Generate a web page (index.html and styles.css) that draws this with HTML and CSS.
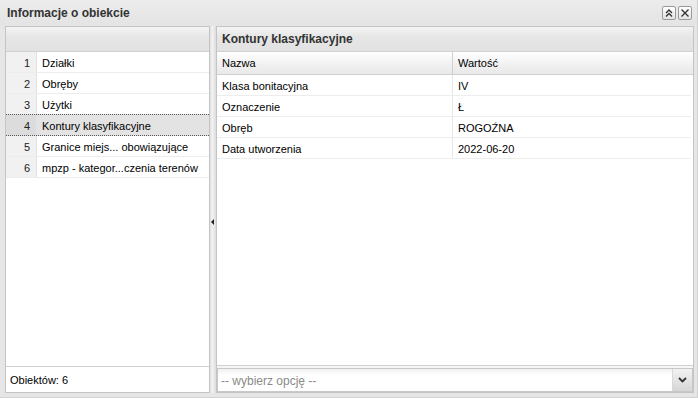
FILE: index.html
```html
<!DOCTYPE html>
<html lang="pl">

<head>
    <meta charset="UTF-8">
    <title>Informacje o obiekcie</title>
    <link rel="stylesheet" href="styles.css">
</head>

<body>
    <div class="window">
        <div class="titlebar">
            <span class="title">Informacje o obiekcie</span>
            <div class="tools">
                <span class="tool">
                    <svg width="10" height="10" viewBox="0 0 10 10">
                        <path d="M2 5 L5 2 L8 5 M2 8.5 L5 5.5 L8 8.5" fill="none" stroke="#333" stroke-width="1.4"/>
                    </svg>
                </span>
                <span class="tool">
                    <svg width="10" height="10" viewBox="0 0 10 10">
                        <path d="M1.5 1.5 L8.5 8.5 M8.5 1.5 L1.5 8.5" fill="none" stroke="#333" stroke-width="1.4"/>
                    </svg>
                </span>
            </div>
        </div>

        <div class="body">
            <!-- lista warstw -->
            <div class="panel list-panel">
                <div class="panel-header"></div>
                <div class="list">
                    <div class="list-row"><span class="num">1</span><span class="name">Działki</span></div>
                    <div class="list-row"><span class="num">2</span><span class="name">Obręby</span></div>
                    <div class="list-row"><span class="num">3</span><span class="name">Użytki</span></div>
                    <div class="list-row selected"><span class="num">4</span><span class="name">Kontury klasyfikacyjne</span></div>
                    <div class="list-row"><span class="num">5</span><span class="name">Granice miejs... obowiązujące</span></div>
                    <div class="list-row"><span class="num">6</span><span class="name">mpzp - kategor...czenia terenów</span></div>
                </div>
                <div class="list-footer">Obiektów: 6</div>
            </div>

            <div class="splitter"><span class="collapse"></span></div>

            <!-- szczegóły obiektu -->
            <div class="panel detail-panel">
                <div class="panel-header">Kontury klasyfikacyjne</div>
                <div class="grid">
                    <div class="grid-row grid-head">
                        <span class="cell key">Nazwa</span>
                        <span class="cell val">Wartość</span>
                    </div>
                    <div class="grid-row">
                        <span class="cell key">Klasa bonitacyjna</span>
                        <span class="cell val">IV</span>
                    </div>
                    <div class="grid-row">
                        <span class="cell key">Oznaczenie</span>
                        <span class="cell val">Ł</span>
                    </div>
                    <div class="grid-row">
                        <span class="cell key">Obręb</span>
                        <span class="cell val">ROGOŹNA</span>
                    </div>
                    <div class="grid-row">
                        <span class="cell key">Data utworzenia</span>
                        <span class="cell val">2022-06-20</span>
                    </div>
                </div>
                <div class="toolbar">
                    <div class="combo">
                        <span class="combo-text">-- wybierz opcję --</span>
                        <span class="combo-trigger">
                            <svg width="9" height="6" viewBox="0 0 9 6">
                                <path d="M1 1 L4.5 4.5 L8 1" fill="none" stroke="#333" stroke-width="1.8"/>
                            </svg>
                        </span>
                    </div>
                </div>
            </div>
        </div>
    </div>
</body>

</html>
```

FILE: styles.css
```css
body {
    margin: 0;
    padding: 0;
    font-family: "Liberation Sans", Arial, sans-serif;
    font-size: 11px;
    color: #000;
    background-color: #e6e6e6;
}

.window {
    width: 698px;
    height: 398px;
    box-sizing: border-box;
    display: flex;
    flex-direction: column;
    background-color: #e6e6e6;
    border-right: 1px solid #d2d2d2;
    border-bottom: 1px solid #d2d2d2;
}

.titlebar {
    height: 25px;
    flex-shrink: 0;
    display: flex;
    align-items: center;
    padding: 0 5px 0 7px;
    background: linear-gradient(#ececec, #e4e4e4);
}

.title {
    font-size: 12px;
    font-weight: bold;
    color: #333;
    flex: 1;
}

.tools {
    display: flex;
    gap: 2px;
}

.tool {
    width: 14px;
    height: 14px;
    box-sizing: border-box;
    border: 1px solid #9a9a9a;
    border-radius: 2px;
    background: linear-gradient(#ffffff, #e2e2e2);
    display: flex;
    align-items: center;
    justify-content: center;
}

.body {
    flex: 1;
    display: flex;
    padding: 1px 3px 4px 5px;
    min-height: 0;
}

.panel {
    display: flex;
    flex-direction: column;
    border: 1px solid #c4c4c4;
    background-color: #fff;
    box-sizing: border-box;
}

.list-panel {
    width: 205px;
}

.detail-panel {
    width: 478px;
}

.panel-header {
    height: 25px;
    flex-shrink: 0;
    box-sizing: border-box;
    border-bottom: 1px solid #d0d0d0;
    background: linear-gradient(#f4f4f4, #e6e6e6 40%, #e2e2e2);
    padding: 5px 5px 0 5px;
    font-size: 12px;
    font-weight: bold;
    color: #333;
}

.list {
    flex: 1;
}

.list-row {
    display: flex;
    height: 21px;
    box-sizing: border-box;
    border-bottom: 1px solid #ededed;
    line-height: 22px;
}

.list-row .num {
    width: 31px;
    box-sizing: border-box;
    text-align: right;
    padding-right: 6px;
    background-color: #f1f1f1;
    border-right: 1px solid #e2e2e2;
    color: #222;
}

.list-row .name {
    padding-left: 5px;
    white-space: nowrap;
}

.list-row.selected {
    background-color: #e3e3e3;
    border-top: 1px dotted #555;
    border-bottom: 1px dotted #555;
    margin-top: -1px;
    height: 22px;
}

.list-row.selected .num {
    background-color: #dcdcdc;
}

.list-footer {
    height: 26px;
    flex-shrink: 0;
    box-sizing: border-box;
    border-top: 1px solid #d0d0d0;
    padding: 7px 0 0 4px;
    font-size: 11px;
}

.splitter {
    width: 6px;
    flex-shrink: 0;
    position: relative;
    background: linear-gradient(90deg, #e0e0e0, #f2f2f2 40%, #dcdcdc);
}

.collapse {
    position: absolute;
    left: 1px;
    top: 193px;
    width: 0;
    height: 0;
    border-top: 3px solid transparent;
    border-bottom: 3px solid transparent;
    border-right: 3px solid #222;
}

.grid {
    flex: 1;
    margin-right: 2px;
}

.grid-row {
    display: flex;
    height: 21px;
    box-sizing: border-box;
    border-bottom: 1px solid #ededed;
    line-height: 22px;
}

.grid-head {
    height: 23px;
    line-height: 22px;
    border-bottom: 1px solid #d0d0d0;
    background: linear-gradient(#ffffff, #f0f0f0 60%, #e9e9e9);
    margin-right: -2px;
}

.cell {
    padding-left: 5px;
    white-space: nowrap;
}

.cell.key {
    width: 236px;
    box-sizing: border-box;
    border-right: 1px solid #e6e6e6;
}

.grid-head .cell.key {
    border-right-color: #d0d0d0;
}

.cell.val {
    flex: 1;
}

.toolbar {
    height: 27px;
    flex-shrink: 0;
    box-sizing: border-box;
    border-top: 1px solid #d0d0d0;
    background: linear-gradient(#f6f6f6, #ececec);
    padding-top: 2px;
}

.combo {
    height: 24px;
    display: flex;
    box-sizing: border-box;
    border: 1px solid #c8c8c8;
    background: linear-gradient(#f0f0f0, #ffffff 6px);
}

.combo-text {
    flex: 1;
    padding: 5px 0 0 3px;
    font-size: 12px;
    color: #8a8a8a;
}

.combo-trigger {
    width: 19px;
    display: flex;
    align-items: center;
    justify-content: center;
    border-left: 1px solid #d8d8d8;
    background: linear-gradient(#f2f2f2, #d6d6d6);
}
```
